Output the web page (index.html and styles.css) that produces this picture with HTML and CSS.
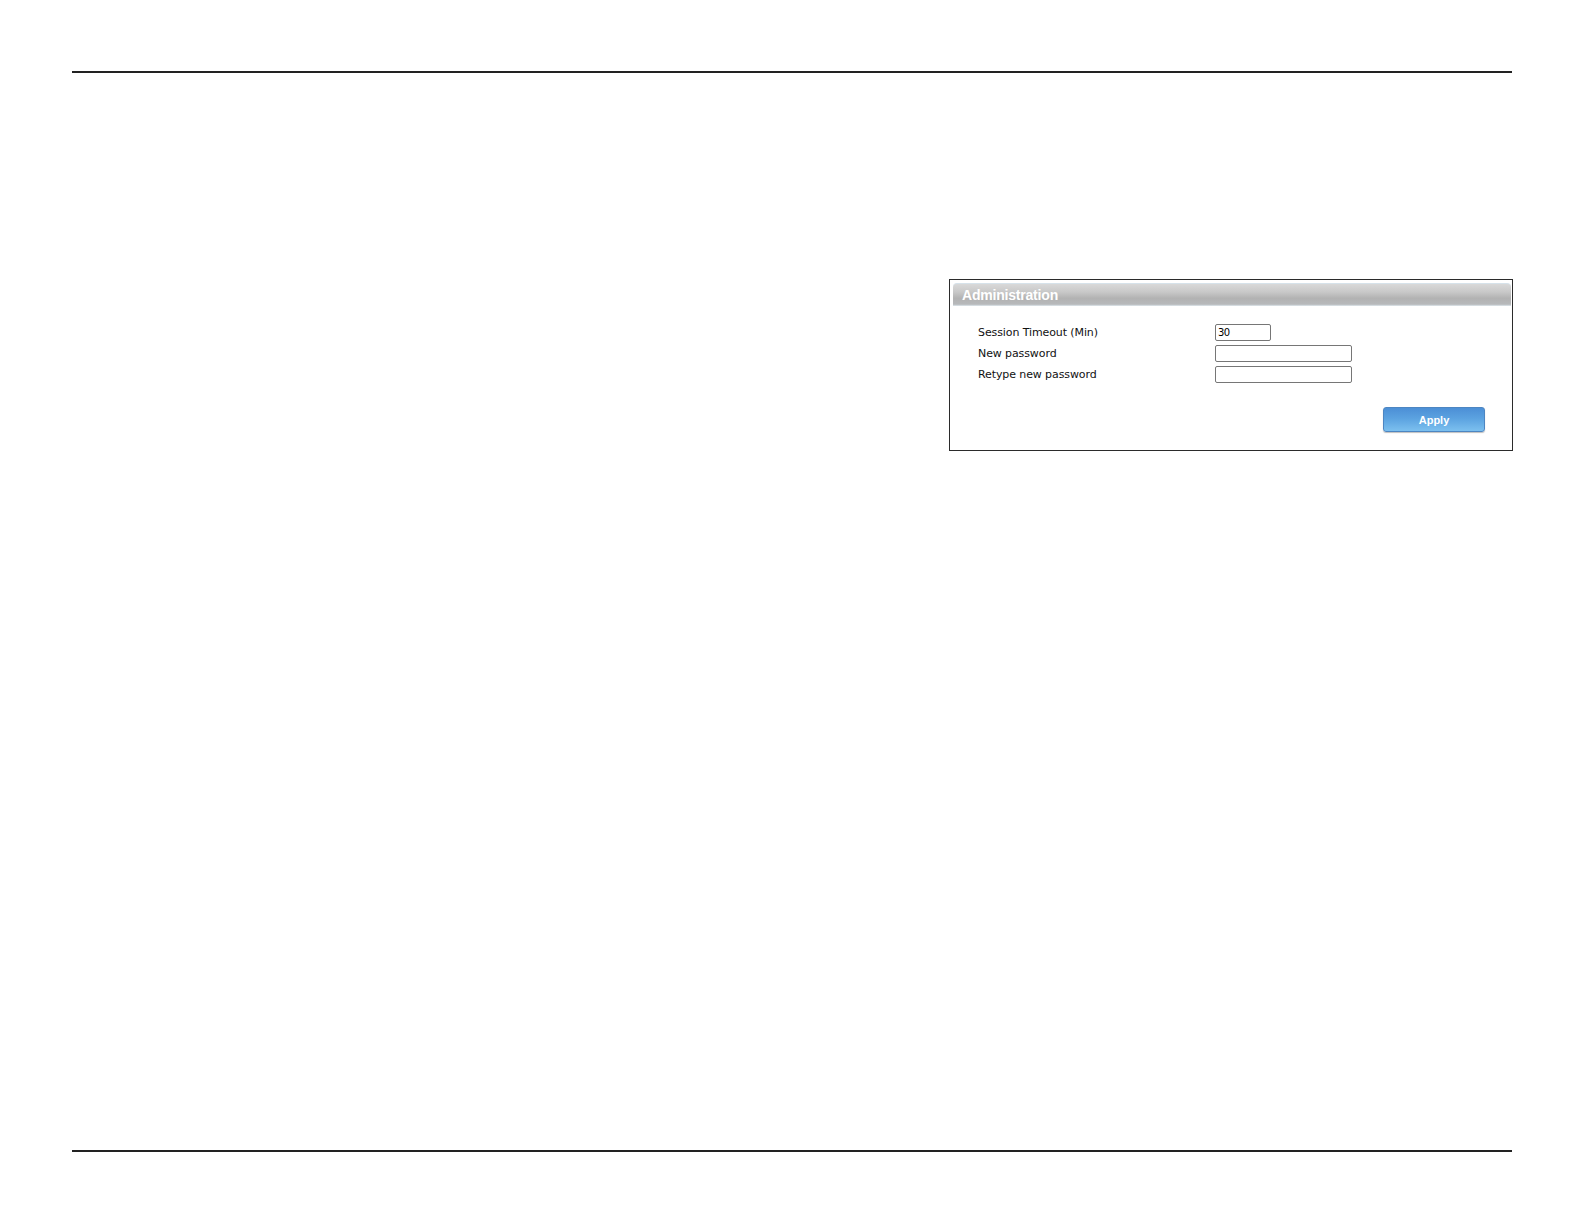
FILE: index.html
```html
<!DOCTYPE html>
<html lang="en">
<head>
    <meta charset="UTF-8">
    <title>Administration</title>
    <link rel="stylesheet" href="styles.css">
</head>
<body>
    <div class="page">
        <div class="rule"></div>

        <div class="content">
            <div class="panel">
                <div class="panel-title">Administration</div>
                <div class="form">
                    <div class="row">
                        <label for="timeout">Session Timeout (Min)</label>
                        <input type="text" id="timeout" class="short" value="30">
                    </div>
                    <div class="row">
                        <label for="newPass">New password</label>
                        <input type="password" id="newPass">
                    </div>
                    <div class="row">
                        <label for="retypePass">Retype new password</label>
                        <input type="password" id="retypePass">
                    </div>
                </div>
                <div class="actions">
                    <button>Apply</button>
                </div>
            </div>
        </div>

        <div class="rule"></div>
    </div>
</body>
</html>
```

FILE: styles.css
```css
body {
    margin: 0;
    background: #ffffff;
    font-family: 'Liberation Sans', Arial, sans-serif;
}
.page {
    height: 1224px;
    box-sizing: border-box;
    padding: 71px 72px 72px 72px;
    display: flex;
    flex-direction: column;
}
.rule {
    height: 2px;
    background: #222222;
}
.content {
    flex: 1;
    display: flex;
    justify-content: flex-end;
    align-items: flex-start;
    padding-top: 206px;
}
.panel {
    width: 564px;
    height: 172px;
    box-sizing: border-box;
    border: 1px solid #2b2b2b;
    padding: 3px 1px 0 3px;
    margin-right: -1px;
}
.panel-title {
    height: 23px;
    line-height: 22px;
    padding-left: 9px;
    color: #ffffff;
    font-weight: bold;
    font-size: 14px;
    letter-spacing: -0.2px;
    border-radius: 4px 4px 0 0;
    border-top: 1px solid #d6e2ea;
    box-sizing: border-box;
    background: linear-gradient(#d9d9d9, #c9c9c9 35%, #b2b2b2 65%, #b7b9bb 92%, #dfe8ee);
}
.form {
    padding: 18px 0 0 25px;
    display: flex;
    flex-direction: column;
    gap: 4px;
}
.row {
    display: flex;
    align-items: center;
    height: 17px;
}
label {
    width: 237px;
    font-family: 'DejaVu Sans', Verdana, sans-serif;
    font-size: 11px;
    letter-spacing: -0.1px;
    color: #111111;
}
input {
    width: 137px;
    height: 17px;
    box-sizing: border-box;
    margin: 0;
    padding: 0 2px;
    border: 1px solid #767676;
    border-radius: 2px;
    font-family: 'DejaVu Sans', Verdana, sans-serif;
    font-size: 10px;
    letter-spacing: -0.5px;
    color: #000000;
}
input.short {
    width: 56px;
}
.actions {
    display: flex;
    justify-content: flex-end;
    padding: 24px 26px 0 0;
}
button {
    width: 102px;
    height: 25px;
    border: 1px solid #4d86c2;
    border-radius: 3px;
    background: linear-gradient(#4c8fd6, #5ba2e0 45%, #7cc0ef);
    box-shadow: 0 1px 1px rgba(0, 0, 0, 0.25);
    color: #ffffff;
    font-family: 'Liberation Sans', Arial, sans-serif;
    font-weight: bold;
    font-size: 11px;
    padding: 0;
    cursor: pointer;
}
```
